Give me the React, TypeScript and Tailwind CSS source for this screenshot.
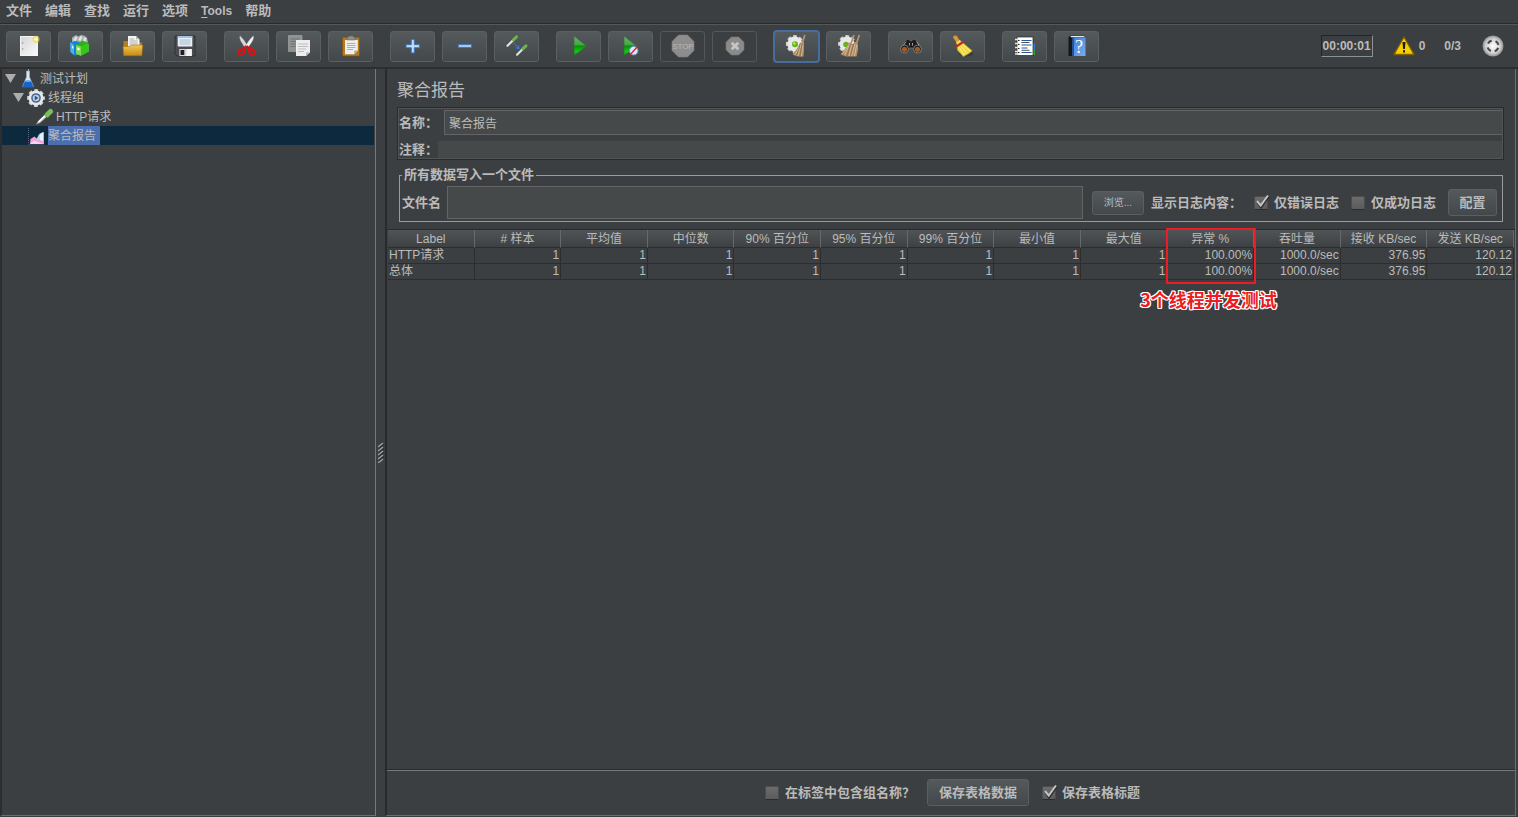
import { useState } from 'react';
import type { ReactNode } from 'react';

function Icon({ children }: { children: ReactNode }) {
  return (
    <svg viewBox="0 0 23 23" className="size-[23px] overflow-visible" aria-hidden="true">
      {children}
    </svg>
  );
}

function Gear({ cx, cy }: { cx: number; cy: number }) {
  return (
    <g>
      <circle cx={cx} cy={cy} r="7.700" fill="none" stroke="#d4d4d4" strokeWidth="2.400" strokeDasharray="3.700 2.348" strokeDashoffset="1.850" />
      <circle cx={cx} cy={cy} r="7.500" fill="#e8e8e8" />
    </g>
  );
}

function Defs() {
  return (
    <svg className="absolute size-0" aria-hidden="true">
      <defs>
        <linearGradient id="paper" x1="0" y1="0" x2="1" y2="1">
          <stop offset="0" stopColor="#d6d6d6" />
          <stop offset="1" stopColor="#fafafa" />
        </linearGradient>
        <linearGradient id="gold" x1="0" y1="0" x2="0" y2="1">
          <stop offset="0" stopColor="#f3c75a" />
          <stop offset="1" stopColor="#c98a12" />
        </linearGradient>
        <linearGradient id="green" x1="0" y1="0" x2="0" y2="1">
          <stop offset="0" stopColor="#5cb85a" />
          <stop offset="0.42" stopColor="#48a846" />
          <stop offset="0.5" stopColor="#0a8f0a" />
          <stop offset="0.8" stopColor="#08d008" />
          <stop offset="1" stopColor="#079507" />
        </linearGradient>
        <linearGradient id="sky" x1="0" y1="0" x2="1" y2="1">
          <stop offset="0" stopColor="#3f7bd0" />
          <stop offset="1" stopColor="#78aef2" />
        </linearGradient>
        <radialGradient id="steel">
          <stop offset="0" stopColor="#ffffff" />
          <stop offset="0.7" stopColor="#cfcfcf" />
          <stop offset="1" stopColor="#8e8e8e" />
        </radialGradient>
      </defs>
    </svg>
  );
}

const NewIcon = (
  <Icon>
    <rect x="3.5" y="1.5" width="17" height="19" fill="url(#paper)" stroke="#f4f4f4" />
    <circle cx="5.7" cy="8" r=".7" fill="#888" />
    <circle cx="5.7" cy="14" r=".7" fill="#888" />
    <circle cx="19" cy="4.3" r="3.6" fill="#e6d84a" opacity=".65" />
    <circle cx="19" cy="4.3" r="1.8" fill="#fdfbb8" />
  </Icon>
);

const TemplatesIcon = (
  <Icon>
    <path d="M3 2.5 7 0l2 1.5L12 0l3 .5 3 2 1 5H3z" fill="#a9aeb0" />
    <path d="m4 5 3-4 1.5 1.5-2 4zm5 0 2.5-4 2 1-2 4zm5 .5 1.5-3.500 2 1.500-1 3z" fill="#dfe3e4" />
    <path d="M1 7.500 7 6l3 1v13l-5 .5L1.500 17z" fill="#1583cf" />
    <path d="M1 7.500 5 9.500V20L1.500 17z" fill="#48b1ef" />
    <path d="M7 10 13.500 5.500 20 9v7.500L12 20.800 7 19z" fill="#2fae18" />
    <path d="m7 10 5 1.500v9.300L7 19z" fill="#7ad957" />
    <path d="M8.300 12.500 10.500 13v2.500l-2.200-.5zM3 11l1.300.6v2.200L3 13z" fill="#fff" />
    <path d="m12 11.500 6-3 2 .5v7.500l-8 4.300z" fill="#37c41c" />
  </Icon>
);

const OpenIcon = (
  <Icon>
    <path d="M2.500 7.500V6h5l1 1.500h12.500v12H2.500z" fill="#b97d17" />
    <path d="M7 1h8l3.500 3.200V14H7z" fill="#f4f4f4" />
    <path d="M15 1v3.200h3.500z" fill="#b5b5b5" />
    <path d="M8.500 4H13M8.500 6h8M8.500 8h8M8.500 10h8" stroke="#a9a9a9" strokeWidth=".9" />
    <path d="M2 11.500h7l1.500-1.500h11.200l-.9 10.700H2.900z" fill="url(#gold)" stroke="#a87210" strokeWidth=".6" />
  </Icon>
);

const SaveIcon = (
  <Icon>
    <path d="M2 1h20v20H4l-2-2z" fill="#4c4a52" stroke="#26262b" strokeWidth=".7" />
    <rect x="4.700" y="1" width="14.600" height="10.500" fill="#e9f1f8" />
    <path d="M4.700 1h14.600v2H4.700z" fill="#9fc3e0" />
    <path d="M6.500 5h11M6.500 7h11M6.500 9h11" stroke="#9cb4c8" strokeWidth=".9" />
    <rect x="6.300" y="14" width="12.500" height="7" fill="#d5d5d5" />
    <rect x="7.500" y="15" width="3.800" height="5" fill="#1f1f22" />
    <path d="M14 14h4.800v7H13z" fill="#f3f3f3" />
  </Icon>
);

const CutIcon = (
  <Icon>
    <path d="M5 .7c-1 2.500.2 5 5.500 12.500l2.500-1.500C10 6 7.500 3 5 .7z" fill="#d9dcdd" stroke="#8d9193" strokeWidth=".4" />
    <path d="M18.300.7c1 2.500-.2 5-5.800 12.500L10 11.700C13.300 6 15.800 3 18.300.7z" fill="#f2f4f4" stroke="#8d9193" strokeWidth=".4" />
    <path d="m11.600 11-2.600 3M11.600 11l2.600 3" stroke="#d61414" strokeWidth="2.600" />
    <ellipse cx="6.500" cy="17" rx="3.200" ry="2.600" fill="none" stroke="#d61414" strokeWidth="2.400" transform="rotate(-38 6.500 17)" />
    <ellipse cx="16.700" cy="17" rx="3.200" ry="2.600" fill="none" stroke="#d61414" strokeWidth="2.400" transform="rotate(38 16.700 17)" />
  </Icon>
);

const CopyIcon = (
  <Icon>
    <path d="M1.500.500h13.500v16H1.500z" fill="#8f9293" stroke="#a8abab" strokeWidth=".6" />
    <path d="M3.500 4h9M3.500 6.500h9M3.500 9h6M3.500 11.500h5" stroke="#6c7071" strokeWidth=".9" />
    <path d="M9 5h14v12.500L19 21H9z" fill="#ededed" />
    <path d="M23 17.500h-4V21z" fill="#b4b4b4" />
    <path d="M11 9h10M11 11.500h10M11 14h8M11 16.500h6" stroke="#b8b8b8" strokeWidth=".9" />
  </Icon>
);

const PasteIcon = (
  <Icon>
    <rect x="3.500" y="2.200" width="17" height="18.800" rx="1" fill="#b87a1e" stroke="#80520f" strokeWidth=".7" />
    <path d="M6 5h12.800v10.500l-3.500 3.700H6z" fill="#efefef" />
    <path d="M18.800 15.500h-3.500v3.700z" fill="#a9a9a9" />
    <path d="M8 8.500h8.500M8 10.500h8.500M8 12.500h8.500M8 14.500h6" stroke="#a5a5a5" strokeWidth=".9" />
    <path d="M8 3.500 10 1h4l2 2.500V5H8z" fill="#8d9285" stroke="#5a5d54" strokeWidth=".5" />
  </Icon>
);

const PlusIcon = (
  <Icon>
    <path d="M10.300 4.500h3v5.200h5.200v3h-5.200v5.200h-3v-5.200H5.100v-3h5.200z" fill="#c5dcf5" stroke="#3b78c4" strokeWidth="1" />
  </Icon>
);

const MinusIcon = (
  <Icon>
    <rect x="5.300" y="9.700" width="13.200" height="2.600" fill="#c5dcf5" stroke="#3b78c4" strokeWidth="1" />
  </Icon>
);

const ToggleIcon = (
  <Icon>
    <path d="m2.500 10.800 6-6" stroke="#dfe2e2" strokeWidth="2.200" strokeLinecap="round" />
    <path d="m8.300 4.800 3.200-3" stroke="#6fb350" strokeWidth="3" strokeLinecap="round" />
    <path d="m12 19.700 6-6" stroke="#dfe2e2" strokeWidth="2.200" strokeLinecap="round" />
    <path d="m17.800 13.800 3.200-3" stroke="#6fb350" strokeWidth="3" strokeLinecap="round" />
    <path d="m8.300 8 4 3.500" stroke="#3478d6" strokeWidth="1.400" strokeDasharray="1.600 .8" />
    <path d="m14.800 14.200-4.300-.8 3.200-3.600z" fill="#3478d6" />
  </Icon>
);

const StartIcon = (
  <Icon>
    <path d="M7.300 1.500 19.300 11 7.300 20.500z" fill="url(#green)" />
  </Icon>
);

const StartNoPausesIcon = (
  <Icon>
    <path d="M5.300 1.500 17.300 11 5.300 20.500z" fill="url(#green)" />
    <circle cx="14.700" cy="15.700" r="4.300" fill="#dceafc" stroke="#5f93d6" strokeWidth="1" />
    <path d="m10.800 20 8-8.800" stroke="#e02222" strokeWidth="1.300" />
  </Icon>
);

const StopIcon = (
  <Icon>
    <path d="M7.500 0h9L23 6.500v9L16.500 22h-9L1 15.500v-9z" fill="#8d8d8d" stroke="#7d7d7d" strokeWidth=".6" />
    <text x="12" y="14.200" textAnchor="middle" fontSize="8" fill="#b8b8b8" fontFamily="Liberation Sans">
      STOP
    </text>
  </Icon>
);

const ShutdownIcon = (
  <Icon>
    <path d="M8.300 2h7.400L21 7.300v7.400L15.700 20H8.300L3 14.700V7.300z" fill="#8a8a8a" stroke="#777" strokeWidth=".6" />
    <path d="m8.700 7.700 6.600 6.600m0-6.600-6.600 6.600" stroke="#c6c6c6" strokeWidth="2.800" />
  </Icon>
);

const ClearIcon = (
  <Icon>
    <Gear cx={9.8} cy={9} />
    <circle cx="10" cy="9.300" r="3" fill="#66b31a" />
    <circle cx="9.300" cy="8.500" r="1.300" fill="#b4ea6a" />
    <path d="m19.800 0-2.800 9" stroke="#b9916a" strokeWidth="1.800" />
    <path d="m15.500 7.500 3.500 1.300v6.200L18.500 21.500H12.500L7.500 19.500 12 13.500z" fill="#b08d68" />
    <path d="m16 9-3 12M14.500 11.500 10 20M17.800 9.500l-1.500 12" stroke="#d8bd9b" strokeWidth=".9" />
    <path d="m15.200 8.500-1.400 6-2.500 6M17.200 9l-2.200 12" stroke="#7d5c3c" strokeWidth=".6" fill="none" />
  </Icon>
);

const ClearAllIcon = (
  <Icon>
    <Gear cx={10} cy={9} />
    <circle cx="9" cy="9.500" r="2.800" fill="#66b31a" />
    <path d="m17 0-3 8.500M22.300 0l-3 9" stroke="#b9916a" strokeWidth="1.800" />
    <path d="m12 7.500 3.500 1.500L17.500 7.500l3.500 1.300v6.200l-1.500 6.500H9L3.500 19.500 8.500 13z" fill="#b08d68" />
    <path d="m12.500 9-4.500 11M11 11 5.500 19M14.500 10l-2.500 11M18 9l-3.500 12M19.800 9.500l-2.300 11.500" stroke="#d8bd9b" strokeWidth=".9" />
    <path d="m13.500 9.500-3.500 11.500M16.500 9l-3 12" stroke="#7d5c3c" strokeWidth=".6" />
  </Icon>
);

const SearchIcon = (
  <Icon>
    <path d="M6 5.500 9.500 4l2 2h1l2-2L18 5.500l5 8.500-1.500 3.500-5 .5-2.500-5h-4l-2.500 5-5-.5L1 14z" fill="#1d1d1d" stroke="#747474" strokeWidth=".7" />
    <path d="M7 6.500 4 11M17.500 6.500l3 4.500M10.500 8v2.500M13.500 8v2.500" stroke="#a2a2a2" strokeWidth="1" />
    <circle cx="5.500" cy="14" r="3.900" fill="#171717" stroke="#858585" strokeWidth=".9" />
    <circle cx="18.500" cy="14" r="3.900" fill="#171717" stroke="#858585" strokeWidth=".9" />
    <circle cx="5.500" cy="14.300" r="2.600" fill="#a75a24" />
    <circle cx="18.500" cy="14.300" r="2.600" fill="#a75a24" />
  </Icon>
);

const BroomIcon = (
  <Icon>
    <ellipse cx="15" cy="19" rx="7" ry="2.500" fill="#2b2d2e" opacity=".5" />
    <path d="M1.800 2.500C2 .3 4.500-.5 6 .8L8.500 5 5.300 7.500z" fill="#d99a3e" stroke="#7d4c12" strokeWidth=".5" />
    <path d="m5 7.300 3.600-2.600 2 2L6 10z" fill="#f0d84a" />
    <path d="m6 11 5.700-3.500 9.600 8.300-3.300 2.700L12.300 21.700 6.300 15z" fill="#f0d83a" stroke="#a78610" strokeWidth=".5" />
    <path d="m8 12 5.500 8M10 11l6 7.500M11.500 9.500l8 7" stroke="#fdf5a8" strokeWidth=".8" />
    <path d="m4.800 10.800 6.800-4.600 1 1.900-6.800 4.500z" fill="#d02020" />
  </Icon>
);

const FunctionsIcon = (
  <Icon>
    <path d="M19 8.500h3V15h-3z" fill="#2b7fdb" />
    <path d="M19 15h3v5h-3z" fill="#35a02b" />
    <path d="M4 2h16v18.500H4z" fill="#fff" stroke="#222" strokeWidth=".7" />
    <path d="M8.500 5.500h10M8.500 10h10M8.500 13h6M8.500 17.500h10" stroke="#2457a0" strokeWidth="1.200" />
    <path d="M8.500 7.500h8M8.500 15.300h8" stroke="#222" strokeWidth=".8" />
    <path d="M2 4.500h4M2 8.500h4M2 12.500h4M2 16.500h4M2 19h4" stroke="#e8e8e8" strokeWidth="1.500" />
    <path d="M5 5.500h1.500M5 9.500h1.500M5 13.500h1.500M5 17.500h1.500" stroke="#222" strokeWidth="1" />
  </Icon>
);

const HelpIcon = (
  <Icon>
    <path d="M3.500 2 5.500.700h14L18 2.500H7V21H3.500z" fill="#15171c" />
    <path d="M5.500 1h14l-1.200 1.300H6z" fill="#e5e9ee" />
    <path d="M7 2.500h13.500V21H7z" fill="url(#sky)" />
    <path d="M7 2.500h2V21H7z" fill="#24539b" />
    <text x="14" y="18" textAnchor="middle" fontSize="18" fill="#fff" fontFamily="Liberation Serif">
      ?
    </text>
  </Icon>
);

type Tool = { name: string; icon: ReactNode; focused?: boolean; disabled?: boolean };

const toolGroups: Tool[][] = [
  [
    { name: '新建', icon: NewIcon },
    { name: '模板', icon: TemplatesIcon },
    { name: '打开', icon: OpenIcon },
    { name: '保存', icon: SaveIcon },
  ],
  [
    { name: '剪切', icon: CutIcon },
    { name: '复制', icon: CopyIcon },
    { name: '粘贴', icon: PasteIcon },
  ],
  [
    { name: '展开', icon: PlusIcon },
    { name: '收起', icon: MinusIcon },
    { name: '切换', icon: ToggleIcon },
  ],
  [
    { name: '启动', icon: StartIcon },
    { name: '不停顿启动', icon: StartNoPausesIcon },
    { name: '停止', icon: StopIcon, disabled: true },
    { name: '关闭', icon: ShutdownIcon, disabled: true },
  ],
  [
    { name: '清除', icon: ClearIcon, focused: true },
    { name: '清除全部', icon: ClearAllIcon },
  ],
  [
    { name: '查找', icon: SearchIcon },
    { name: '重置查找', icon: BroomIcon },
  ],
  [
    { name: '函数助手', icon: FunctionsIcon },
    { name: '帮助', icon: HelpIcon },
  ],
];

function ToolButton({ tool }: { tool: Tool }) {
  const surface = tool.disabled ? 'border-[#545758]' : 'border-[#5b5f61] bg-linear-to-b from-[#54595b] to-[#43484a]';
  const ring = tool.focused ? 'outline-2 -outline-offset-1 outline-[#466d9c]' : '';
  return (
    <button
      type="button"
      aria-label={tool.name}
      disabled={tool.disabled}
      className={`flex h-[31px] w-[45px] items-center justify-center rounded-[3px] border ${surface} ${ring}`}
    >
      {tool.icon}
    </button>
  );
}

function MenuBar() {
  const items = ['文件', '编辑', '查找', '运行', '选项'];
  return (
    <nav className="flex h-[24px] items-center gap-[13px] border-b border-[#282a2b] px-[6px] pb-px text-[13px] leading-4 font-bold">
      {items.map((item) => (
        <button key={item} type="button">
          {item}
        </button>
      ))}
      <button type="button" className="text-xs">
        <span className="underline underline-offset-2">T</span>ools
      </button>
      <button type="button">帮助</button>
    </nav>
  );
}

function Toolbar() {
  return (
    <header className="flex items-center border-t border-[#555859] px-[6px] pt-[6px] pb-[5px]">
      <div className="flex gap-[17px]">
        {toolGroups.map((group, i) => (
          <div key={i} className="flex gap-[7px]">
            {group.map((tool) => (
              <ToolButton key={tool.name} tool={tool} />
            ))}
          </div>
        ))}
      </div>
      <div className="ml-auto flex items-center pr-2 pb-px text-xs font-bold">
        <output className="border border-t-[#222425] border-r-[#8a9192] border-b-[#8a9192] border-l-[#222425] px-px py-[2px]">
          00:00:01
        </output>
        <svg viewBox="0 0 22 20" className="ml-[20px] h-5 w-[22px]" aria-hidden="true">
          <path d="M11 1 21 18.500H1z" fill="#f7cf00" stroke="#7d6200" strokeWidth="1.400" strokeLinejoin="round" />
          <path d="M9.500 6h3L11.900 13h-1.800zM10 14.300h2v2.200h-2z" fill="#1a1a1a" />
        </svg>
        <span className="ml-1">0</span>
        <span className="ml-[19px]">0/3</span>
        <svg viewBox="0 0 22 22" className="ml-[21px] size-[22px]" aria-hidden="true">
          <circle cx="11" cy="11" r="10.500" fill="url(#steel)" />
          <circle cx="11" cy="11" r="5.500" fill="none" stroke="#484848" strokeWidth="2.200" strokeDasharray="4.600 4.039" strokeDashoffset="-2" />
        </svg>
      </div>
    </header>
  );
}

const FlaskIcon = (
  <svg viewBox="0 0 16 20" className="h-5 w-4" aria-hidden="true">
    <path d="M6.500 2h3v6l4 9.500H2.500l4-9.500z" fill="#dbe6ef" stroke="#9fb0bd" strokeWidth=".6" />
    <path d="M5 12h6l2.300 5.500c.2.700-.3 1-1 1H3.500c-.7 0-1-.4-.8-1z" fill="#1565c8" />
    <ellipse cx="8" cy="12" rx="3" ry="1" fill="#6fb1f2" />
    <path d="M8.500 0v3" stroke="#b9c3ca" strokeWidth=".8" />
  </svg>
);

const GearIcon = (
  <svg viewBox="0 0 18 18" className="mr-px size-[18px]" aria-hidden="true">
    <Gear cx={9} cy={9} />
    <circle cx="9" cy="9" r="4.800" fill="#49658e" />
    <circle cx="9" cy="9" r="3.300" fill="#b8cde8" />
    <path d="M7.800 6.800 11.300 9l-3.500 2.200z" fill="#2f4c78" />
  </svg>
);

const PipetteIcon = (
  <svg viewBox="0 0 20 18" className="mr-px h-[18px] w-5" aria-hidden="true">
    <path d="m1.500 16.800 2.500-4 7-6.800 2.500 2.500L6 15.200z" fill="#c9cdce" stroke="#3f4345" strokeWidth=".7" />
    <path d="m4.500 14 7-6.700" stroke="#fff" strokeWidth="1.200" />
    <path d="m10 5 5 5" stroke="#2d5d22" strokeWidth="2" />
    <path d="m13.200 6.800 3.300-3.300" stroke="#7cbb62" strokeWidth="5" strokeLinecap="round" />
  </svg>
);

const ChartIcon = (
  <svg viewBox="0 0 16 18" className="h-[18px] w-4" aria-hidden="true">
    <path d="M.500 1v16M.500 17.500h15" stroke="#59677a" strokeWidth="1" strokeDasharray="1 1" />
    <path d="M8 12c2-1 2-5 5-6l2.500-1v12H8z" fill="#a9dcf7" />
    <path d="M12 12V7.500L15.500 5v12H12z" fill="#e5f4fc" />
    <path d="m2 17 .5-5 4-2.500 3 3 3 .5 2.500 1v3z" fill="#f0a6dc" />
    <path d="m2 17 4-3.500 9 3.500z" fill="#fbd3f0" />
  </svg>
);

function TreeRow({ indent, open, icon, label, selected }: { indent: string; open?: boolean; icon: ReactNode; label: string; selected?: boolean }) {
  return (
    <li
      role="treeitem"
      aria-selected={Boolean(selected)}
      className={`flex h-[19px] items-center ${indent} ${selected ? 'bg-[#0d293e]' : ''}`}
    >
      <span className="w-[11px]">
        {open && (
          <svg viewBox="0 0 11 9" className="h-[9px] w-[11px]" aria-hidden="true">
            <path d="M0 0h11L5.500 9z" fill="#adadad" />
          </svg>
        )}
      </span>
      <span className="flex w-6 justify-center">{icon}</span>
      <span className={`h-[19px] leading-[20px] ${selected ? 'bg-[#4b6eaf] pr-1' : ''}`}>{label}</span>
    </li>
  );
}

function TestPlanTree() {
  return (
    <aside className="mb-px w-[376px] shrink-0 border-r border-b border-l-2 border-r-[#77797a] border-b-[#6b6e70] border-l-[#2b2d2e] pr-px">
      <ul role="tree" className="text-xs">
        <TreeRow indent="pl-[3px]" open icon={FlaskIcon} label="测试计划" />
        <TreeRow indent="pl-[11px]" open icon={GearIcon} label="线程组" />
        <TreeRow indent="pl-[19px]" icon={PipetteIcon} label="HTTP请求" />
        <TreeRow indent="pl-[11px]" icon={ChartIcon} label="聚合报告" selected />
      </ul>
    </aside>
  );
}

function Splitter() {
  return (
    <div role="separator" className="flex w-[9px] shrink-0 items-center justify-center pt-5">
      <svg viewBox="0 0 6 20" className="h-5 w-[6px]" aria-hidden="true">
        <path d="m0 4 5-4M0 8l5-4M0 12l5-4M0 16l5-4M0 20l5-4" stroke="#a5a5a5" strokeWidth="1.300" />
        <path d="m1 5.500 5-4M1 9.500l5-4M1 13.500l5-4M1 17.500l5-4" stroke="#202223" strokeWidth=".8" />
      </svg>
    </div>
  );
}

function Checkbox({ label, initial }: { label: string; initial: boolean }) {
  const [checked, setChecked] = useState(initial);
  return (
    <label className="flex items-center gap-[6px] whitespace-nowrap">
      <span className="relative size-[14px]">
        <input
          type="checkbox"
          checked={checked}
          onChange={(e) => setChecked(e.target.checked)}
          className="peer block size-[14px] appearance-none rounded-[2px] border border-[#4b4e50] border-b-[#2a2c2d] bg-linear-to-b from-[#6b6b6b] to-[#5c5c5c]"
        />
        <svg
          viewBox="0 0 16 16"
          className="pointer-events-none absolute -top-[2px] left-0 hidden size-4 peer-checked:block"
          aria-hidden="true"
        >
          <path d="m3.500 8 3.500 5L14.500 2.500" fill="none" stroke="#2b2b2b" strokeWidth="2.500" />
          <path d="m3 7 3.700 4.500L14 1.500" fill="none" stroke="#c4c4c4" strokeWidth="2" />
        </svg>
      </span>
      {label}
    </label>
  );
}

const buttonSurface = 'rounded-[3px] border border-[#5b5f61] bg-linear-to-b from-[#54595b] to-[#43484a]';

function NameForm() {
  return (
    <div className="mr-[11px] ml-[10px] border border-[#282a2b] text-[13px] outline-1 -outline-offset-2 outline-[#525556]">
      <div className="flex items-center gap-[6px] pt-[2px] pl-px">
        <label htmlFor="name" className="font-bold">
          名称：
        </label>
        <input
          id="name"
          defaultValue="聚合报告"
          className="h-[25px] min-w-0 flex-1 border border-[#646464] bg-[#45494a] px-1 text-xs"
        />
      </div>
      <div className="mt-[5px] flex items-center pl-px">
        <label htmlFor="comments" className="leading-[19px] font-bold">
          注释：
        </label>
        <input id="comments" className="h-[18px] min-w-0 flex-1 bg-[#45494a] px-1 text-xs" />
      </div>
    </div>
  );
}

function FileFieldset() {
  return (
    <fieldset className="mx-3 mt-2 border border-[#999b9c] px-[2px] pb-[2px] text-[13px] font-bold">
      <legend className="px-[2px] leading-[14px]">所有数据写入一个文件</legend>
      <div className="flex items-center pt-1 pr-[3px]">
        <label htmlFor="filename">文件名</label>
        <input id="filename" className="ml-[6px] h-[33px] min-w-0 flex-1 border border-[#646464] bg-[#45494a] px-1" />
        <button type="button" className={`ml-[9px] h-6 w-[52px] text-[10px] font-normal ${buttonSurface}`}>
          浏览...
        </button>
        <span className="mr-3 ml-[7px]">显示日志内容：</span>
        <Checkbox label="仅错误日志" initial={true} />
        <span className="w-3" />
        <Checkbox label="仅成功日志" initial={false} />
        <button type="button" className={`ml-3 h-[27px] w-[49px] ${buttonSurface}`}>
          配置
        </button>
      </div>
    </fieldset>
  );
}

const columns = [
  'Label',
  '# 样本',
  '平均值',
  '中位数',
  '90% 百分位',
  '95% 百分位',
  '99% 百分位',
  '最小值',
  '最大值',
  '异常 %',
  '吞吐量',
  '接收 KB/sec',
  '发送 KB/sec',
];

const rows = [
  ['HTTP请求', '1', '1', '1', '1', '1', '1', '1', '1', '100.00%', '1000.0/sec', '376.95', '120.12'],
  ['总体', '1', '1', '1', '1', '1', '1', '1', '1', '100.00%', '1000.0/sec', '376.95', '120.12'],
];

const outlinedText =
  '[text-shadow:1px_0_#fff,-1px_0_#fff,0_1px_#fff,0_-1px_#fff,1px_1px_#fff,-1px_-1px_#fff,1px_-1px_#fff,-1px_1px_#fff]';

function ReportTable() {
  return (
    <div className="mt-[7px] flex-1 border-t border-b border-t-[#282a2b] border-b-[#282a2b] px-px">
      <table className="w-full table-fixed border-separate border-spacing-0 text-xs">
        <thead>
          <tr>
            {columns.map((column) => (
              <th
                key={column}
                scope="col"
                className="relative h-[18px] border-r border-b border-r-[#66696a] border-b-[#2b2d2e] bg-linear-to-b from-[#505457] to-[#3e4143] px-0 pt-px pb-0 leading-4 font-normal whitespace-nowrap"
              >
                {column}
                {column === '异常 %' && (
                  <>
                    <span className="absolute -top-[2px] -right-[3px] -left-px z-10 h-14 border-2 border-[#ed1c24]" />
                    <span
                      className={`absolute top-[59px] left-[48%] z-10 -translate-x-1/2 font-['Noto_Sans_CJK_SC',sans-serif] text-lg leading-5 font-bold whitespace-nowrap text-[#ed1c24] ${outlinedText}`}
                    >
                      3个线程并发测试
                    </span>
                  </>
                )}
              </th>
            ))}
          </tr>
        </thead>
        <tbody>
          {rows.map((row) => (
            <tr key={row[0]}>
              {row.map((cell, i) => (
                <td
                  key={i}
                  className={`h-4 border-r border-b border-[#2b2d2e] px-px py-0 leading-[15px] whitespace-nowrap ${i === 0 ? 'text-left' : 'text-right'}`}
                >
                  {cell}
                </td>
              ))}
            </tr>
          ))}
        </tbody>
      </table>
    </div>
  );
}

function ReportPanel() {
  return (
    <main className="mr-[2px] mb-px flex min-w-0 flex-1 flex-col border-r border-b border-l-2 border-r-[#6b6e70] border-b-[#6b6e70] border-l-[#282a2b]">
      <h1 className="px-[10px] pt-[11px] pb-[5px] text-[17px] leading-[22px]">聚合报告</h1>
      <NameForm />
      <FileFieldset />
      <ReportTable />
      <div className="flex h-[45px] items-center justify-center border-t border-[#77797a] pb-px pl-[3px] text-[13px] font-bold">
        <Checkbox label="在标签中包含组名称？" initial={false} />
        <button type="button" className={`mr-[13px] ml-3 h-[27px] px-[11px] ${buttonSurface}`}>
          保存表格数据
        </button>
        <Checkbox label="保存表格标题" initial={true} />
      </div>
    </main>
  );
}

export default function App() {
  return (
    <div className="flex h-screen flex-col bg-[#3c3f41] font-['Liberation_Sans','Noto_Sans_CJK_SC',sans-serif] text-[#bbbbbb]">
      <Defs />
      <MenuBar />
      <Toolbar />
      <div className="flex min-h-0 flex-1 border-t-2 border-[#2b2d2e]">
        <TestPlanTree />
        <Splitter />
        <ReportPanel />
      </div>
    </div>
  );
}
